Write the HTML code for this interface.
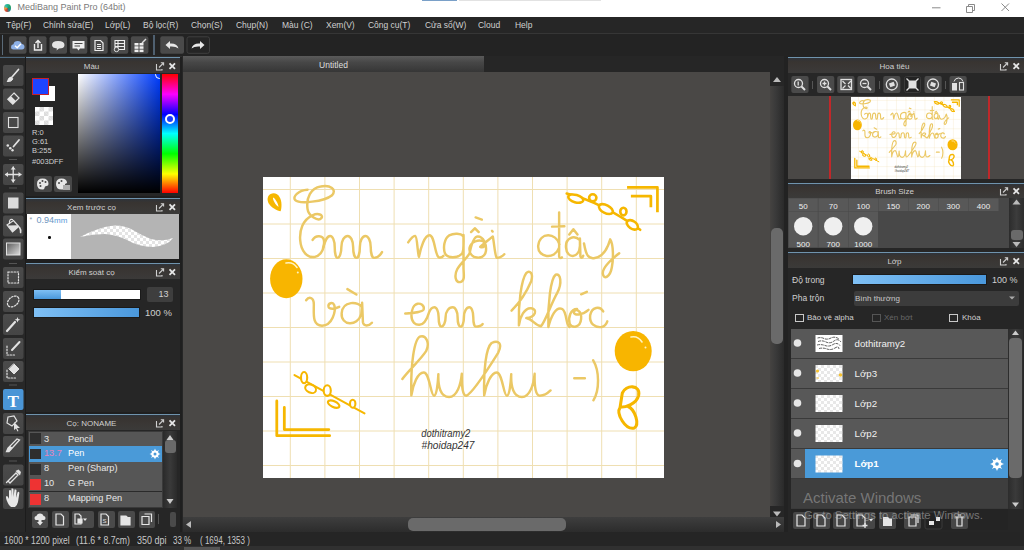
<!DOCTYPE html>
<html><head><meta charset="utf-8">
<style>
*{margin:0;padding:0;box-sizing:border-box}
html,body{width:1024px;height:550px;overflow:hidden;background:#262626;font-family:"Liberation Sans",sans-serif;}
.a{position:absolute}
#title{left:0;top:0;width:1024px;height:17px;background:#fff}
#menu{left:0;top:17px;width:1024px;height:16px;background:#262626;color:#d0d0d0;font-size:9px}
#menu span{position:absolute;top:3px;white-space:nowrap;transform-origin:0 0;transform:scaleX(.94)}
#tb{left:0;top:33px;width:1024px;height:23px;background:#232323;border-top:1px solid #363636}
.tbtn{position:absolute;top:2px;width:18px;height:18px;background:#4a4a4a;border-radius:2px}
.tool{position:absolute;left:3px;width:20px;height:21px;background:#484848;border-radius:2px}
.tsep{position:absolute;left:9px;width:8px;height:1px;background:#555}
.ptop{position:absolute;height:1px;background:#6f93ad}
.ph{position:absolute;height:15px;background:#383533;color:#d0d0d0;font-size:8px;text-align:center;line-height:15px;padding-top:0.5px;white-space:nowrap}
.pb{position:absolute;background:#262626}
.hic{position:absolute;top:3px;width:9px;height:9px;}
</style></head><body>

<!-- TITLE -->
<div class="a" id="title">
  <div class="a" style="left:4px;top:4px;width:7px;height:8px;border-radius:50% 50% 50% 50%;background:conic-gradient(from 200deg,#d04030 0deg,#f0a040 60deg,#30c0b0 120deg,#20a060 220deg,#1a8a90 300deg,#d04030 360deg)"></div>
  <div class="a" style="left:17.5px;top:2px;font-size:9px;color:#7a7a7a;white-space:nowrap">MediBang Paint Pro (64bit)</div>
  <div class="a" style="left:422px;top:0;width:35px;height:1px;background:#7aa0c8"></div>
  <div class="a" style="left:459px;top:0;width:142px;height:1px;background:#e2e2e2"></div>
  <svg class="a" style="left:928px;top:0" width="90" height="17">
   <path d="M4 7.8 H12.5" stroke="#8a8a8a" stroke-width="1"/>
   <path d="M38.5 6.5 H44.5 V12.5 H38.5Z M40.5 6.5 V4.5 H46.5 V10.5 H44.5" stroke="#8a8a8a" stroke-width="1" fill="none"/>
   <path d="M73.5 3.5 L81 11 M81 3.5 L73.5 11" stroke="#8a8a8a" stroke-width="1"/>
  </svg>
</div>
<!-- MENU -->
<div class="a" id="menu">
  <span style="left:6.3px">Tệp(F)</span>
  <span style="left:42.7px">Chỉnh sửa(E)</span>
  <span style="left:105.4px">Lớp(L)</span>
  <span style="left:143px">Bộ lọc(R)</span>
  <span style="left:191.3px">Chọn(S)</span>
  <span style="left:236px">Chụp(N)</span>
  <span style="left:282.4px">Màu (C)</span>
  <span style="left:326.3px">Xem(V)</span>
  <span style="left:368.2px">Công cụ(T)</span>
  <span style="left:424.7px">Cửa sổ(W)</span>
  <span style="left:478.1px">Cloud</span>
  <span style="left:514.5px">Help</span>
</div>
<!-- TOOLBAR -->
<div class="a" id="tb">
  <div class="a" style="left:2px;top:1px;width:1px;height:20px;background:#5a6a78"></div>
  <div class="a" style="left:153px;top:1px;width:1.5px;height:20px;background:#4f6070"></div>
</div>
<svg class="a" style="left:0;top:33px" width="220" height="23">
 <g fill="#4a4a4a">
  <rect x="9" y="3.3" width="17.5" height="17.5" rx="2"/>
  <rect x="29" y="3.3" width="17.5" height="17.5" rx="2"/>
  <rect x="49.5" y="3.3" width="17.5" height="17.5" rx="2"/>
  <rect x="69.8" y="3.3" width="17.5" height="17.5" rx="2"/>
  <rect x="90.2" y="3.3" width="17.5" height="17.5" rx="2"/>
  <rect x="110.8" y="3.3" width="17.5" height="17.5" rx="2"/>
  <rect x="130.9" y="3.3" width="17.5" height="17.5" rx="2"/>
  <rect x="160.3" y="3.3" width="23.7" height="17.5" rx="2"/>
 </g>
 <rect x="187" y="3.8" width="22.5" height="16.5" rx="2" fill="#252525" stroke="#3f3f3f"/>
 <!-- cloud -->
 <path d="M13.5 16.5 Q11 16.5 11 14 Q11 11.5 13.5 11.3 Q14 8 17.8 8 Q21 8 21.8 11 Q24.5 11.3 24.5 13.8 Q24.5 16.5 22 16.5Z" fill="#8fb2e8"/>
 <path d="M15 12.8 L17.2 14.8 L21 10.8" stroke="#fff" stroke-width="1.4" fill="none"/>
 <g stroke="#eee" fill="none" stroke-width="1.4">
  <!-- share -->
  <path d="M34.5 11 V17 H41.5 V11"/><path d="M38 15 V8 M35.5 10 L38 7.5 L40.5 10"/>
  <!-- doc -->
  <path d="M95 7.5 H100.5 L103 10 V17.5 H95Z" stroke-width="1.2"/><path d="M97 11.5 H101 M97 13.5 H101 M97 15.5 H101" stroke-width="1"/>
  <!-- list gear -->
  <path d="M115 7.5 H124.5 V16.5 H115Z M115 10.5 H124.5 M115 13.5 H124.5 M118 7.5 V16.5" stroke-width="1.1"/>
 </g>
 <!-- bubble -->
 <path d="M58 8 Q64.5 8 64.5 12 Q64.5 15.5 59 15.5 L56.5 17.5 L57 15.5 Q52 15 52 12 Q52 8 58 8Z" fill="#e6e6e6"/>
 <!-- form -->
 <path d="M72.5 8 H84.5 V15.5 H80 L78.5 17.5 L77 15.5 H72.5Z" fill="#eee"/>
 <path d="M74.5 10.5 H82.5 M74.5 13 H80" stroke="#4a4a4a" stroke-width="1.2"/>
 <circle cx="116.5" cy="16.5" r="2.2" fill="#4a4a4a" stroke="#ddd" stroke-width="1"/>
 <!-- grid pencil -->
 <g fill="#eee"><rect x="134.5" y="10" width="4" height="2.5"/><rect x="139.5" y="10" width="4" height="2.5"/><rect x="134.5" y="13.3" width="4" height="2.5"/><rect x="139.5" y="13.3" width="4" height="2.5"/><rect x="134.5" y="16.6" width="4" height="2.5"/><rect x="139.5" y="16.6" width="4" height="2.5"/></g>
 <path d="M142 10 L146 6" stroke="#ddd" stroke-width="1.5"/>
 <!-- undo -->
 <path d="M165.5 12 L170 8 V10.5 Q177 10 178.5 15.5 Q175.5 13 170 13.5 V16Z" fill="#e8e8e8"/>
 <!-- redo -->
 <path d="M204.5 12 L200 8 V10.5 Q193 10 191.5 15.5 Q194.5 13 200 13.5 V16Z" fill="#e8e8e8"/>
</svg>
<div class="a" style="left:0;top:56px;width:1024px;height:1px;background:#2e2e2e"></div>


<!-- TOOLS COLUMN -->
<div class="a" style="left:0;top:57px;width:26px;height:475px;background:#282828"></div>
<div class="a" style="left:25px;top:57px;width:1px;height:475px;background:#1c1c1c"></div>
<div class="a" style="left:0;top:57px;width:25px;height:1px;background:#4f6a80"></div>
<svg class="a" style="left:0;top:0" width="26" height="532">
<defs>
<linearGradient id="gbtn" x1="0" y1="0" x2="0" y2="1"><stop offset="0" stop-color="#4b4b4b"/><stop offset="1" stop-color="#454545"/></linearGradient>
<linearGradient id="ggrad" x1="0" y1="0" x2="1" y2="1"><stop offset="0" stop-color="#5a5a5a"/><stop offset="1" stop-color="#e0e0e0"/></linearGradient>
</defs>
<g fill="url(#gbtn)">
<rect x="3" y="65" width="20.5" height="21" rx="2"/>
<rect x="3" y="88.5" width="20.5" height="21" rx="2"/>
<rect x="3" y="112" width="20.5" height="21" rx="2"/>
<rect x="3" y="135.5" width="20.5" height="21" rx="2"/>
<rect x="3" y="164" width="20.5" height="21" rx="2"/>
<rect x="3" y="192.5" width="20.5" height="21" rx="2"/>
<rect x="3" y="215.5" width="20.5" height="21" rx="2"/>
<rect x="3" y="238.5" width="20.5" height="21" rx="2"/>
<rect x="3" y="267" width="20.5" height="21" rx="2"/>
<rect x="3" y="291" width="20.5" height="21" rx="2"/>
<rect x="3" y="314" width="20.5" height="21" rx="2"/>
<rect x="3" y="338" width="20.5" height="21" rx="2"/>
<rect x="3" y="361" width="20.5" height="21" rx="2"/>
<rect x="3" y="413" width="20.5" height="21" rx="2"/>
<rect x="3" y="436" width="20.5" height="21" rx="2"/>
<rect x="3" y="464.5" width="20.5" height="21" rx="2"/>
<rect x="3" y="488" width="20.5" height="21" rx="2"/>
</g>
<rect x="3" y="389" width="20.5" height="21" rx="2" fill="#4a95d6"/>
<g fill="#555">
<rect x="9" y="159" width="8" height="1"/><rect x="9" y="187.5" width="8" height="1"/>
<rect x="9" y="263" width="8" height="1"/><rect x="9" y="384.5" width="8" height="1"/>
<rect x="9" y="460.5" width="8" height="1"/>
</g>
<g stroke="#e2e2e2" fill="none" stroke-width="1.6" stroke-linecap="round">
<!-- brush -->
<path d="M18.5 69.5 L12 77" stroke-width="1.7"/>
<path d="M7.5 81.5 Q8 77.5 11 77 L12.8 78.6 Q12 82 7.5 81.5Z" fill="#e2e2e2" stroke-width="1"/>
<!-- eraser -->
<path d="M14 93 L19 98 L12.8 104.2 L7.8 99.2Z" stroke-width="1.2"/>
<path d="M7.8 99.2 L10.9 96.1 L15.9 101.1 L12.8 104.2Z" fill="#e2e2e2" stroke="none"/>
<!-- rect -->
<rect x="8.5" y="117.5" width="9.5" height="10" stroke-width="1.1"/>
<!-- dot pen -->
<path d="M19 140 L13.5 146.5" stroke-width="1.8"/>
<circle cx="7.8" cy="145.5" r="1.3" fill="#e2e2e2" stroke="none"/><circle cx="10.3" cy="148.3" r="1.3" fill="#e2e2e2" stroke="none"/><circle cx="12.5" cy="150.3" r="1.2" fill="#e2e2e2" stroke="none"/>
<!-- move -->
<path d="M13.2 167 V182 M5.5 174.5 H21" stroke-width="1.3"/>
<path d="M13.2 166.5 l-2.5 3 h5z M13.2 182.5 l-2.5 -3 h5z M5 174.5 l3 -2.5 v5z M21.5 174.5 l-3 -2.5 v5z" fill="#e2e2e2" stroke="none"/>
<!-- filled square -->
<rect x="8" y="197.5" width="10.5" height="11" fill="#dcdcdc" stroke="none"/>
<!-- bucket -->
<path d="M7 225 L13.5 220.5 L18.8 226.5 L12.5 232 Z" fill="none" stroke="#e2e2e2" stroke-width="1.2"/>
<path d="M7.6 225.5 L17.5 225.2 L18.8 226.5 L12.5 232Z" fill="#e2e2e2" stroke="none"/>
<path d="M9.5 223.5 Q9 218.5 12.5 219.5" stroke-width="1.2"/>
<path d="M19.5 227.5 Q21.2 230 20.6 232.5" stroke-width="1.6"/>
<!-- gradient -->
<rect x="6.5" y="243" width="13.5" height="12" fill="url(#ggrad)" stroke="#e2e2e2" stroke-width="1"/>
<!-- dotted rect -->
<rect x="8" y="272" width="10.5" height="11" stroke-width="1.2" stroke-dasharray="1.5 1.5"/>
<!-- lasso -->
<ellipse cx="13.2" cy="301.5" rx="6.5" ry="4.5" transform="rotate(-40 13.2 301.5)" stroke-width="1.2" stroke-dasharray="1.5 1.5"/>
<!-- wand -->
<path d="M7 331 L15 322" stroke-width="2.2"/>
<path d="M17.5 317 l0.8 2 2 .8 -2 .8 -.8 2 -.8 -2 -2 -.8 2 -.8z" fill="#e2e2e2" stroke="none"/>
<!-- select pen -->
<path d="M7 346 V355 H16" stroke-width="1.2" stroke-dasharray="1.5 1.5"/>
<path d="M19.5 342 L12 350" stroke-width="2"/>
<!-- select eraser -->
<path d="M7 370 V378 H16" stroke-width="1.2" stroke-dasharray="1.5 1.5"/>
<path d="M14 364 L19 369 L14 374 L9 369Z" fill="#e2e2e2" stroke-width="1"/>
<!-- shape select -->
<path d="M8 417 L14 416 L17 421 L12 426 L7 423Z" stroke-width="1.2"/>
<path d="M14 422 L20 428 L17 428 L18.5 431 L17.5 431.5 L16 428.5 L14 430Z" fill="#e2e2e2" stroke="none"/>
<!-- knife -->
<path d="M19.5 440 L9 451.5 L6.5 451.5 L8 448 L17 439 Z" fill="none" stroke-width="1.3"/>
<path d="M8 448 L6.5 451.5 L9 451.5 L12.5 447.5 L10 446Z" fill="#e2e2e2" stroke="none"/>
<!-- eyedropper -->
<path d="M8 481 L6.5 482.5 M8 481 L16 473 L18 475 L10 483 Z" stroke-width="1.3"/>
<path d="M15.5 471 L20 475.5 L21 472 L18.5 469.5Z" fill="#e2e2e2" stroke="none"/>
</g>
<!-- T -->
<text x="13.2" y="407" font-family="Liberation Serif" font-size="17" font-weight="bold" fill="#fff" text-anchor="middle">T</text>
<!-- hand -->
<path d="M9 505 Q6 500 6 497 L6.5 496 Q7.5 496 8 497 L9 499 L9 491 Q9 490 10 490 Q11 490 11 491 L11 497 L11.5 489 Q11.5 488 12.5 488.5 Q13.5 488.5 13.5 489.5 L13.5 497 L14.5 490 Q14.5 489 15.5 489.5 Q16.5 489.5 16.5 490.5 L16 498 L17.5 492.5 Q18 491.5 19 492 Q19.5 492.5 19.3 493.5 L18 502 Q17 506 15 507 L11 507Z" fill="#e8e8e8"/>
</svg>
<!-- LEFT PANELS -->
<div class="a" style="left:26px;top:57px;width:156px;height:475px;background:#1f1f1f"></div>
<!-- Mau -->
<div class="ptop" style="left:26px;top:57px;width:154px"></div>
<div class="a" style="left:26px;top:58px;width:154px;height:15px;background:linear-gradient(#2f3339,#383431 25%,#3a3735 60%,#3b3a39)"></div>
<div class="ph" style="left:26px;top:58px;width:131px;background:transparent">Màu</div>
<div class="pb" style="left:26px;top:73px;width:154px;height:123px"></div>
<svg class="a" style="left:154px;top:60px" width="26" height="12">
 <path d="M3 4.5 H2.5 V10 H8 V9" stroke="#cfcfcf" fill="none" stroke-width="1.1"/>
 <path d="M5 7.5 L9 3.5 M6.8 2.8 H9.6 V5.6" stroke="#cfcfcf" fill="none" stroke-width="1.1"/>
 <path d="M15.5 3.3 L21 8.8 M21 3.3 L15.5 8.8" stroke="#e6e6e6" stroke-width="1.8"/>
</svg>
<div class="a" style="left:39.5px;top:85.5px;width:15.5px;height:15.5px;background:#fff"></div>
<div class="a" style="left:31.5px;top:78px;width:17px;height:17px;background:#1d44ff;border:1.5px solid #c8202a"></div>
<div class="a" style="left:35px;top:106.5px;width:17.5px;height:18px;background:#fff;background-image:linear-gradient(45deg,#ddd 25%,transparent 25%,transparent 75%,#ddd 75%),linear-gradient(45deg,#ddd 25%,transparent 25%,transparent 75%,#ddd 75%);background-size:9px 9px;background-position:0 0,4.5px 4.5px"></div>
<div class="a" style="left:32px;top:128px;font-size:7.5px;line-height:9px;color:#cfcfcf">R:0<br>G:61<br>B:255</div>
<div class="a" style="left:32px;top:157px;font-size:7.5px;color:#cfcfcf">#003DFF</div>
<div class="a" style="left:34px;top:176px;width:17.5px;height:16px;background:#484848;border-radius:2px"></div>
<div class="a" style="left:54px;top:176px;width:17.5px;height:16px;background:#484848;border-radius:2px"></div>
<svg class="a" style="left:34px;top:176px" width="40" height="16">
 <path d="M8.5 2.5 Q14.5 2.5 14.5 8 Q14.5 10 12.5 10 Q10.5 10 10.5 12 Q10.5 13.5 8.5 13.5 Q3 13.5 3 8 Q3 2.5 8.5 2.5Z" fill="#e6e6e6"/>
 <circle cx="6" cy="7" r="1" fill="#484848"/><circle cx="8.5" cy="5" r="1" fill="#484848"/><circle cx="11.5" cy="6" r="1" fill="#484848"/><circle cx="6.5" cy="10" r="1" fill="#484848"/>
 <path d="M27.5 2.5 Q33 2.5 33 7 L31 8 L31 13.5 H27.5 Q22 13.5 22 8 Q22 2.5 27.5 2.5Z" fill="#e6e6e6"/>
 <circle cx="25" cy="7" r="1" fill="#484848"/><circle cx="27.5" cy="5" r="1" fill="#484848"/>
 <rect x="29" y="9" width="7" height="5" fill="#aaa"/>
</svg>
<div class="a" style="left:77.5px;top:74px;width:82px;height:118.5px;background:linear-gradient(to bottom,rgba(0,0,0,0),#000),linear-gradient(to right,#fff,#003dff)"></div>
<div class="a" style="left:77.5px;top:74px;width:82px;height:118.5px;overflow:hidden"><div class="a" style="left:77px;top:-4px;width:9px;height:9px;border:1.5px solid #fff;border-radius:50%"></div></div>
<div class="a" style="left:162px;top:74px;width:16px;height:118.5px;background:linear-gradient(to bottom,#ff0000 0%,#ff00ff 17%,#0000ff 34%,#00ffff 50%,#00ff00 67%,#ffff00 84%,#ff0000 100%)"></div>
<div class="a" style="left:165px;top:114px;width:10px;height:10px;border:2px solid #fff;border-radius:50%;background:#1a3cff"></div>

<!-- Xem truoc co -->
<div class="ptop" style="left:26px;top:198px;width:154px"></div>
<div class="a" style="left:26px;top:199px;width:154px;height:15px;background:linear-gradient(#2f3339,#383431 25%,#3a3735 60%,#3b3a39)"></div>
<div class="ph" style="left:26px;top:199px;width:131px;background:transparent">Xem trước cọ</div>
<svg class="a" style="left:154px;top:201px" width="26" height="12">
 <path d="M3 4.5 H2.5 V10 H8 V9" stroke="#cfcfcf" fill="none" stroke-width="1.1"/>
 <path d="M5 7.5 L9 3.5 M6.8 2.8 H9.6 V5.6" stroke="#cfcfcf" fill="none" stroke-width="1.1"/>
 <path d="M15.5 3.3 L21 8.8 M21 3.3 L15.5 8.8" stroke="#e6e6e6" stroke-width="1.8"/>
</svg>
<div class="a" style="left:26.5px;top:214px;width:44.5px;height:45px;background:#fff"></div>
<div class="a" style="left:71px;top:214px;width:108px;height:45px;background:#b4b4b4"></div>
<div class="a" style="left:29.5px;top:216px;font-size:7px;color:#8a9aaa">*</div><div class="a" style="left:36.5px;top:215.3px;font-size:9px;color:#6d95c0;white-space:nowrap">0.94<span style="font-size:8px;color:#5a9ad8">mm</span></div>
<div class="a" style="left:48px;top:236px;width:2.5px;height:2.5px;background:#111;border-radius:50%"></div>
<svg class="a" style="left:71px;top:214px" width="108" height="45">
 <defs><pattern id="chk" width="6" height="6" patternUnits="userSpaceOnUse"><rect width="6" height="6" fill="#fff"/><rect width="3" height="3" fill="#e4e4e4"/><rect x="3" y="3" width="3" height="3" fill="#e4e4e4"/></pattern></defs>
 <path d="M9 23 Q20 17 34 13 Q48 9 60 15 Q70 21 80 25 Q92 28 102 24 Q96 32 82 33 Q68 33 56 26 Q46 21 34 20 Q22 20 9 23Z" fill="url(#chk)"/>
</svg>

<!-- Kiem soat co -->
<div class="ptop" style="left:26px;top:263px;width:154px"></div>
<div class="a" style="left:26px;top:264px;width:154px;height:15px;background:linear-gradient(#2f3339,#383431 25%,#3a3735 60%,#3b3a39)"></div>
<div class="ph" style="left:26px;top:264px;width:131px;background:transparent">Kiểm soát cọ</div>
<svg class="a" style="left:154px;top:266px" width="26" height="12">
 <path d="M3 4.5 H2.5 V10 H8 V9" stroke="#cfcfcf" fill="none" stroke-width="1.1"/>
 <path d="M5 7.5 L9 3.5 M6.8 2.8 H9.6 V5.6" stroke="#cfcfcf" fill="none" stroke-width="1.1"/>
 <path d="M15.5 3.3 L21 8.8 M21 3.3 L15.5 8.8" stroke="#e6e6e6" stroke-width="1.8"/>
</svg>
<div class="pb" style="left:26px;top:279px;width:154px;height:133px"></div>
<div class="a" style="left:33px;top:288.5px;width:108px;height:11px;background:#fff;border:1px solid #1a1a1a"></div>
<div class="a" style="left:34px;top:289.5px;width:27px;height:9px;background:linear-gradient(#7fc0f5,#4a98dc)"></div>
<div class="a" style="left:146.5px;top:286.5px;width:26px;height:15.5px;background:#3e3e3e;border-radius:2px;color:#d0d0d0;font-size:9px;text-align:right;padding-right:4px;line-height:15px">13</div>
<div class="a" style="left:33px;top:307px;width:107px;height:11px;background:linear-gradient(90deg,#7fc0f5,#4a98dc);border:1px solid #1a1a1a"></div>
<div class="a" style="left:145px;top:307px;font-size:9.5px;color:#d0d0d0;white-space:nowrap">100 %</div>

<!-- Co NONAME -->
<div class="ptop" style="left:26px;top:414px;width:154px"></div>
<div class="a" style="left:26px;top:415px;width:154px;height:15px;background:linear-gradient(#2f3339,#383431 25%,#3a3735 60%,#3b3a39)"></div>
<div class="ph" style="left:26px;top:415px;width:131px;background:transparent">Cọ: NONAME</div>
<svg class="a" style="left:154px;top:417px" width="26" height="12">
 <path d="M3 4.5 H2.5 V10 H8 V9" stroke="#cfcfcf" fill="none" stroke-width="1.1"/>
 <path d="M5 7.5 L9 3.5 M6.8 2.8 H9.6 V5.6" stroke="#cfcfcf" fill="none" stroke-width="1.1"/>
 <path d="M15.5 3.3 L21 8.8 M21 3.3 L15.5 8.8" stroke="#e6e6e6" stroke-width="1.8"/>
</svg>
<div class="pb" style="left:26px;top:430px;width:154px;height:102px"></div>
<div class="a" style="left:28px;top:430.5px;width:135px;height:77px;background:#2a2a2a;border:1px solid #3a3a3a"></div>
<div class="a" style="left:29px;top:431.5px;width:133px;height:14px;background:#565656"></div>
<div class="a" style="left:29px;top:446px;width:133px;height:15.5px;background:#4a9ad8"></div>
<div class="a" style="left:29px;top:462px;width:133px;height:14.5px;background:#565656"></div>
<div class="a" style="left:29px;top:477px;width:133px;height:14px;background:#565656"></div>
<div class="a" style="left:29px;top:491.5px;width:133px;height:15px;background:#565656"></div>
<div class="a" style="left:30px;top:433px;width:11px;height:10.5px;background:#2e2e2e"></div>
<div class="a" style="left:30px;top:448.5px;width:11px;height:10.5px;background:#2e2e2e"></div>
<div class="a" style="left:30px;top:464px;width:11px;height:10.5px;background:#2e2e2e"></div>
<div class="a" style="left:30px;top:479px;width:11px;height:10.5px;background:#ee3333"></div>
<div class="a" style="left:30px;top:494px;width:11px;height:10.5px;background:#ee3333"></div>
<div class="a" style="left:44px;top:431.8px;font-size:9.2px;line-height:15px;color:#e8e8e8;white-space:nowrap">3</div>
<div class="a" style="left:68px;top:431.8px;font-size:9.2px;line-height:15px;color:#e8e8e8;white-space:nowrap">Pencil</div>
<div class="a" style="left:44px;top:446.3px;font-size:9.2px;line-height:15px;color:#e884b8;white-space:nowrap">13.7</div>
<div class="a" style="left:68px;top:446.3px;font-size:9.2px;line-height:15px;color:#fff;white-space:nowrap">Pen</div>
<div class="a" style="left:44px;top:461.3px;font-size:9.2px;line-height:15px;color:#e8e8e8;white-space:nowrap">8</div>
<div class="a" style="left:68px;top:461.3px;font-size:9.2px;line-height:15px;color:#e8e8e8;white-space:nowrap">Pen (Sharp)</div>
<div class="a" style="left:44px;top:476.3px;font-size:9.2px;line-height:15px;color:#e8e8e8;white-space:nowrap">10</div>
<div class="a" style="left:68px;top:476.3px;font-size:9.2px;line-height:15px;color:#e8e8e8;white-space:nowrap">G Pen</div>
<div class="a" style="left:44px;top:491.3px;font-size:9.2px;line-height:15px;color:#e8e8e8;white-space:nowrap">8</div>
<div class="a" style="left:68px;top:491.3px;font-size:9.2px;line-height:15px;color:#e8e8e8;white-space:nowrap">Mapping Pen</div>
<svg class="a" style="left:149px;top:448px" width="12" height="12"><g fill="#fff"><circle cx="6" cy="6" r="3.6"/><path d="M6 0.5 L7 3 L5 3Z M6 11.5 L7 9 L5 9Z M0.5 6 L3 5 L3 7Z M11.5 6 L9 5 L9 7Z M2 2 L4.2 3.2 L3.2 4.2Z M10 10 L7.8 8.8 L8.8 7.8Z M10 2 L8.8 4.2 L7.8 3.2Z M2 10 L3.2 7.8 L4.2 8.8Z"/></g><circle cx="6" cy="6" r="1.5" fill="#4a9ad8"/></svg>
<!-- scrollbar -->
<div class="a" style="left:163px;top:431px;width:14px;height:77px;background:linear-gradient(90deg,#2a2a2a,#3a3a3a,#2a2a2a)"></div>
<svg class="a" style="left:163px;top:431px" width="14" height="77"><path d="M7 4 L10.5 9 H3.5Z" fill="#ccc"/><path d="M7 73 L10.5 68 H3.5Z" fill="#ccc"/></svg>
<div class="a" style="left:164.5px;top:440px;width:11px;height:13px;background:#6a6a6a;border-radius:3px"></div>
<!-- bottom toolbar -->
<div class="a" style="left:32px;top:511px;width:15.5px;height:16.5px;background:#4a4a4a;border-radius:2px"></div>
<div class="a" style="left:51.5px;top:511px;width:17px;height:16.5px;background:#4a4a4a;border-radius:2px"></div>
<div class="a" style="left:72px;top:511px;width:22px;height:16.5px;background:#4a4a4a;border-radius:2px"></div>
<div class="a" style="left:97.5px;top:511px;width:17px;height:16.5px;background:#4a4a4a;border-radius:2px"></div>
<div class="a" style="left:117.5px;top:511px;width:17px;height:16.5px;background:#4a4a4a;border-radius:2px"></div>
<div class="a" style="left:138.5px;top:511px;width:16.5px;height:16.5px;background:#4a4a4a;border-radius:2px"></div>
<div class="a" style="left:158px;top:514px;width:1px;height:10px;background:#555"></div>
<div class="a" style="left:170px;top:512px;width:6px;height:15px;background:#4a4a4a;border-radius:2px"></div>
<svg class="a" style="left:32px;top:511px" width="125" height="17">
 <g fill="#e6e6e6" stroke="none">
  <path d="M4 9 Q2.5 9 2.5 7 Q2.5 5 4.5 5 Q5 2.5 8 2.5 Q11 2.5 11.5 5 Q13.5 5 13.5 7 Q13.5 9 12 9 Z"/>
  <path d="M6.5 9 H9.5 V11 H11 L8 14.5 L5 11 H6.5Z" fill="#e6e6e6"/>
 </g>
 <g stroke="#e6e6e6" fill="none" stroke-width="1.2">
  <path d="M24 3 H29 L31.5 5.5 V14 H24Z"/>
  <path d="M43 3 H47 L49 5 V13 H43Z"/><path d="M46 8 H50 V12 H46Z" fill="#e6e6e6"/>
  <path d="M69 3 H74 L76.5 5.5 V14 H69Z"/>
  <path d="M89 5 H94 L95.5 6.5 H98 V14 H89Z" fill="#e6e6e6"/>
  <path d="M110 5.5 H117 V13.5 H110Z M112.5 3 H119.5 V11"/>
 </g>
 <path d="M51 7.5 L55 7.5 L53 10Z" fill="#e6e6e6"/>
 <text x="70.5" y="12" font-size="6" fill="#e6e6e6" font-family="Liberation Sans">S</text>
</svg>
<!-- CANVAS -->
<div class="a" style="left:182px;top:56px;width:606px;height:16px;background:#262626"></div>
<div class="a" style="left:183px;top:56px;width:301px;height:15.5px;background:linear-gradient(#5a5a5a,#474747 40%,#363636);color:#dedede;font-size:8.5px;text-align:center;line-height:18px">Untitled</div>
<div class="a" style="left:183px;top:72px;width:587px;height:445px;background:#4a4846"></div>
<div class="a" style="left:770px;top:72px;width:14px;height:445px;background:linear-gradient(90deg,#454341,#3a3a3a 40%,#2a2a2a)"></div>
<div class="a" style="left:770px;top:72px;width:14px;height:14px;background:#262626"></div><div class="a" style="left:770px;top:506px;width:14px;height:11px;background:#262626"></div><svg class="a" style="left:770px;top:72px" width="14" height="460"><path d="M7 5 L11 10 H3Z" fill="#bbb"/><path d="M7 444.5 L11 439.5 H3Z" fill="#bbb"/></svg>
<div class="a" style="left:771px;top:228px;width:12px;height:116px;background:#6a6a6a;border-radius:5px"></div>
<div class="a" style="left:183px;top:517px;width:601px;height:15px;background:linear-gradient(#3e3e3e,#2c2c2c)"></div>
<svg class="a" style="left:183px;top:517px" width="601" height="15"><path d="M3 7.5 L8 4 V11Z" fill="#bbb"/><path d="M598 7.5 L593 4 V11Z" fill="#bbb"/></svg>
<div class="a" style="left:408px;top:518px;width:158px;height:13px;background:#6a6a6a;border-radius:5px"></div>

<svg width="0" height="0" style="position:absolute">
<defs>
<symbol id="art" viewBox="0 0 401 301">
 <rect width="401" height="301" fill="#fff"/>
 <g stroke="#efdfb2" stroke-width="1" fill="none">
  <path d="M27.3 0V301M61.9 0V301M96.5 0V301M131.1 0V301M165.7 0V301M200.3 0V301M234.9 0V301M269.5 0V301M304.1 0V301M338.7 0V301M373.3 0V301"/>
  <path d="M0 12.5H401M0 47H401M0 81.5H401M0 116H401M0 150.5H401M0 185H401M0 219.5H401M0 254H401M0 288.5H401"/>
 </g>
 <g fill="none" stroke="#ebc865" stroke-linecap="round" stroke-linejoin="round">
  <!-- Em -->
  <g transform="translate(20,1) scale(0.1637)" style="stroke-width:calc(15px * var(--k,1))">
   <path d="M150,72 C95,75 55,115 75,135 C100,160 250,145 300,105 C330,70 290,40 230,52 C170,62 140,120 150,190 C155,230 215,270 235,245 C248,225 215,212 180,228 C120,255 100,320 105,380 C110,450 150,490 195,482 C240,470 255,420 250,380 C245,350 200,345 181,378"/>
   <path d="M245,426 C255,392 266,354 288,354 C303.3,354 315.9,383.5 315.9,421 C315.9,458.5 323.6,488 333,488 C346,488 356.6,458.5 356.6,421 C356.6,383.5 373.9,354 395,354 C413.4,354 428.5,383.5 428.5,421 C428.5,458.5 437.7,488 449,488 C460.3,488 469.5,458.5 469.5,421 C469.5,383.5 484.6,354 503,354 C521.1,354 535.9,383.5 535.9,421 C535.9,458.5 544.9,488 556,488 C570,488 592,476 605,453"/>
  </g>
  <!-- ngoi -->
  <g transform="translate(137,38) scale(0.1637)" style="stroke-width:calc(15px * var(--k,1))">
   <path d="M50,167 C65,145 80,125 93,128 C106,131 106,230 116,256 C126,200 150,124 180,124 C212,124 212,240 235,257 C245,262 258,258 265,250"/>
   <path d="M388,130 C370,112 330,110 300,125 C270,145 262,200 275,235 C290,265 350,268 380,235 C388,220 390,180 388,122 L388,320 C388,360 400,405 368,410 C338,412 330,370 350,330 C370,295 405,268 425,235 C432,200 445,131 475,131 C510,131 530,180 525,220 C520,255 490,262 470,260 C440,258 420,230 425,200 C430,170 480,140 515,165 C530,180 510,205 490,195 C505,180 545,150 567,131 C575,170 580,245 590,260 C600,265 625,255 637,240"/>
   <path d="M434,104 L457,81 L481,104 M462,15 L500,28 M562,97 l4,4"/>
  </g>
  <!-- day -->
  <g transform="translate(267,28) scale(0.1637)" style="stroke-width:calc(15px * var(--k,1))">
   <path d="M178,45 L178,315 C178,325 190,325 195,320 M180,240 C160,170 60,160 50,250 C45,320 150,340 178,260 M135,132 L210,130"/>
   <path d="M305,215 C270,180 215,200 220,260 C225,330 300,330 305,250 L305,205 L308,315 C310,325 320,325 325,310 M240,180 L265,148 L290,180"/>
   <path d="M330,235 C340,290 350,330 390,325 C440,320 470,280 490,210 C510,240 510,330 500,380 C490,440 450,460 445,420 C440,380 500,330 545,295"/>
  </g>
  <!-- va -->
  <g transform="translate(32,93) scale(0.1637)" style="stroke-width:calc(15px * var(--k,1))">
   <path d="M68,185 C85,160 115,165 115,210 C115,270 105,340 165,340 C230,340 250,250 240,215 C230,190 200,205 205,225 C210,240 240,240 270,225"/>
   <path d="M410,230 C390,190 290,185 285,265 C280,340 380,350 405,270 L410,200 L415,320 C420,345 450,345 470,322 M320,117 L375,150"/>
  </g>
  <!-- em -->
  <g transform="translate(137,93) scale(0.1637)" style="stroke-width:calc(15px * var(--k,1))">
   <path d="M32,266 C80,262 140,258 145,240 C150,215 125,203 108,206 C85,210 70,240 70,280 C70,320 95,336 118,335 C150,333 165,300 177,260 C185,240 195,228 210,228 C224.3,228 236,254 236,287 C236,320 243.2,346 252,346 C266.6,346 278.6,320 278.6,287 C278.6,254 298.1,228 322,228 C338.4,228 351.8,254 351.8,287 C351.8,320 360,346 370,346 C381.3,346 390.5,320 390.5,287 C390.5,254 405.6,228 424,228 C437,228 447.6,254 447.6,287 C447.6,320 454.1,346 462,346 C480,346 498,340 505,330"/>
  </g>
  <!-- khoc -->
  <g transform="translate(242,78) scale(0.1637)" style="stroke-width:calc(15px * var(--k,1))">
   <path d="M40,340 C80,300 130,230 160,160 C175,110 150,90 130,110 C100,150 80,300 85,430 C90,380 120,320 160,325 C200,330 190,380 130,385 C170,390 180,430 220,435 C250,400 280,300 320,230 C350,170 340,110 310,120 C280,140 260,300 265,440 C280,380 310,310 350,330 C380,350 370,430 395,440"/>
   <path d="M440,330 C400,330 385,380 395,420 C410,450 460,445 465,390 C470,340 430,320 420,350 C420,370 470,370 510,335 M465,240 L500,225"/>
   <path d="M600,345 C580,310 530,315 520,370 C515,420 550,445 590,440 C610,435 620,420 625,405"/>
  </g>
  <!-- huhu -->
  <g transform="translate(132,148) scale(0.1637)" style="stroke-width:calc(15px * var(--k,1))">
   <path d="M45,330 C80,280 150,220 190,160 C215,110 190,60 155,70 C115,85 95,250 100,430 C110,360 140,290 175,290 C212,290 218,432 238,432 C254,432 262,360 265,300 C262,380 280,440 330,440 C380,440 402,360 408,298 C406,380 415,432 435,432 C470,420 580,250 630,170 C660,110 630,90 590,110 C555,140 540,280 545,430 C555,360 590,290 620,290 C657,290 663,432 683,432 C699,432 707,360 710,300 C707,380 725,440 775,440 C825,440 847,360 853,298 C851,380 860,432 885,432 C915,432 940,410 950,400"/>
   <path d="M1095,325 L1160,325 M1210,215 C1250,280 1250,400 1212,460"/>
  </g>
 </g>
 <g fill="none" stroke="#f6b700" stroke-linecap="round" stroke-linejoin="round">
  <!-- top right vine + bracket -->
  <g style="stroke-width:calc(2.6px * var(--k,1))">
   <path d="M303.7,16.6 C320,20.5 345,30 377.2,52.8"/>
   <ellipse fill="#fff" cx="312.75" cy="21.6" rx="7.75" ry="3.7" transform="rotate(16 312.75 21.6)"/>
   <ellipse fill="#fff" cx="342.85" cy="32.1" rx="7.55" ry="4" transform="rotate(27 342.85 32.1)"/>
   <ellipse fill="#fff" cx="369.35" cy="47.85" rx="6.25" ry="3.8" transform="rotate(35 369.35 47.85)"/>
   <ellipse fill="#fff" cx="329.75" cy="20.8" rx="3.65" ry="3.5"/>
   <ellipse fill="#fff" cx="360.4" cy="34.6" rx="3.1" ry="3.8"/>
  </g>
  <g transform="translate(292,3) scale(0.1092)" style="stroke-width:calc(25px * var(--k,1))">
   <path d="M660,68 H938 V295 M695,148 H878 V250" stroke-linecap="butt"/>
  </g>
  <!-- bottom left vine + bracket -->
  <g style="stroke-width:calc(2.1px * var(--k,1))">
   <path d="M31.5,198.1 L101.5,236.3"/>
   <ellipse fill="#fff" cx="41.1" cy="200.6" rx="3.1" ry="5.6"/>
   <ellipse fill="#fff" cx="47.65" cy="211.7" rx="5.65" ry="4" transform="rotate(25 47.65 211.7)"/>
   <ellipse fill="#fff" cx="64.25" cy="213.55" rx="3.55" ry="5.35"/>
   <ellipse fill="#fff" cx="70.65" cy="227.15" rx="6.25" ry="2.9" transform="rotate(25 70.65 227.15)"/>
   <ellipse fill="#fff" cx="89.7" cy="226.7" rx="2.7" ry="4"/>
  </g>
  <g transform="translate(2,183) scale(0.1637)">
   <path d="M72,250 V462 H395 M118,290 V425 H390" style="stroke-width:calc(17px * var(--k,1))"/>
  </g>
  <!-- B -->
  <g transform="translate(332,143) scale(0.2183)" style="stroke-width:calc(14px * var(--k,1))">
   <path d="M125,335 C140,295 210,295 200,345 C190,385 140,400 115,400 C95,430 140,505 180,495 C205,480 185,410 150,395 M125,335 L115,400"/>
  </g>
  <!-- drop -->
  
 </g>
 </g>
 <g transform="translate(12.5,25.5) rotate(-30)"><path d="M0,-9.8 C4,-9.8 6.3,-6.5 6.3,-2.5 C6.3,2.5 2.5,8 0,10.2 C-2.5,8 -6.3,2.5 -6.3,-2.5 C-6.3,-6.5 -4,-9.8 0,-9.8Z" fill="#f6b700"/><path d="M0.3,-5.5 C1.8,-3.5 1.8,2 0.3,5.5 C-1.3,2 -1.3,-3.5 0.3,-5.5Z" fill="#fff"/></g>
 <ellipse cx="23.3" cy="101.8" rx="16.2" ry="19.5" fill="#f8b500"/>
 <path d="M23 86 Q30 84.5 34 90.5" stroke="#fff3c0" style="stroke-width:calc(1.6px * var(--k,1))" fill="none" stroke-linecap="round"/>
 <circle cx="34.8" cy="95.5" r="1" fill="#fff3c0"/>
 <ellipse cx="370.2" cy="174.1" rx="18.5" ry="20.2" fill="#f8b500"/>
 <path d="M368 160 Q375 158.5 379 165" stroke="#fff3c0" style="stroke-width:calc(1.6px * var(--k,1))" fill="none" stroke-linecap="round"/>
 <circle cx="382.5" cy="170.5" r="1" fill="#fff3c0"/>
 <text x="158.3" y="259.8" font-family="Liberation Sans" font-style="italic" font-size="10" fill="#333" textLength="49" lengthAdjust="spacingAndGlyphs">dothitramy2</text>
 <text x="158.5" y="271.9" font-family="Liberation Sans" font-style="italic" font-size="10" fill="#333" textLength="53" lengthAdjust="spacingAndGlyphs">#hoidap247</text>
</symbol>
</defs>
</svg>
<svg class="a" style="left:263px;top:177px" width="401" height="301"><use href="#art"/></svg>
<!-- RIGHT PANELS -->
<div class="a" style="left:784px;top:56px;width:240px;height:476px;background:#222"></div>
<!-- Hoa tieu -->
<div class="ptop" style="left:788px;top:57px;width:236px"></div>
<div class="a" style="left:788px;top:58px;width:236px;height:15px;background:linear-gradient(#2f3339,#383431 25%,#3a3735 60%,#3b3a39)"></div>
<div class="ph" style="left:788px;top:58px;width:213px;background:transparent">Hoa tiêu</div>
<svg class="a" style="left:998px;top:60px" width="26" height="12">
 <path d="M3 4.5 H2.5 V10 H8 V9" stroke="#cfcfcf" fill="none" stroke-width="1.1"/>
 <path d="M5 7.5 L9 3.5 M6.8 2.8 H9.6 V5.6" stroke="#cfcfcf" fill="none" stroke-width="1.1"/>
 <path d="M15.5 3.3 L21 8.8 M21 3.3 L15.5 8.8" stroke="#e6e6e6" stroke-width="1.8"/>
</svg>
<div class="pb" style="left:788px;top:73px;width:236px;height:23px;background:#272727"></div>
<svg class="a" style="left:788px;top:73px" width="236" height="23">
 <g fill="#4a4a4a">
  <rect x="3.3" y="3" width="17.3" height="17" rx="2"/>
  <rect x="29" y="3" width="17.3" height="17" rx="2"/>
  <rect x="49.2" y="3" width="17.3" height="17" rx="2"/>
  <rect x="69.4" y="3" width="17.6" height="17" rx="2"/>
  <rect x="95.2" y="3" width="17.2" height="17" rx="2"/>
  <rect x="136.5" y="3" width="17.2" height="17" rx="2"/>
  <rect x="161.5" y="3" width="17.2" height="17" rx="2"/>
 </g>
 <rect x="116.5" y="3.5" width="16" height="16" rx="2" fill="#232323" stroke="#3a3a3a"/>
 <g fill="#555"><rect x="24" y="8" width="1" height="8"/><rect x="91" y="8" width="1" height="8"/><rect x="157" y="8" width="1" height="8"/></g>
 <g stroke="#e0e0e0" fill="none" stroke-width="1.3">
  <circle cx="10.5" cy="10.5" r="4"/><path d="M13.5 13.5 L17 17" stroke-width="2"/>
  <circle cx="36.5" cy="10.5" r="4"/><path d="M39.5 13.5 L43 17" stroke-width="2"/><path d="M34.5 10.5 H38.5 M36.5 8.5 V12.5"/>
  <rect x="53" y="6.5" width="10.5" height="10"/>
  <circle cx="76.5" cy="10.5" r="4"/><path d="M79.5 13.5 L83 17" stroke-width="2"/><path d="M74.5 10.5 H78.5"/>
  <circle cx="103.8" cy="11.5" r="5.5"/>
  <circle cx="145" cy="11.5" r="5.5"/>
  <path d="M166 8.5 Q167 5 170.5 5 Q174 5 175 8.5" stroke-width="1"/><rect x="171.5" y="9.5" width="4" height="7.5" stroke-width="1.1"/>
 </g>
 <g fill="#e0e0e0">
  <path d="M10.2 8.5 V12.5" stroke="#e0e0e0" stroke-width="1.3"/>
  <rect x="101.5" y="9.5" width="5" height="4" transform="rotate(-20 104 11.5)"/>
  <rect x="142.5" y="9.5" width="5" height="4" transform="rotate(20 145 11.5)"/>
  <rect x="120.5" y="7.5" width="8" height="8"/>
  <path d="M54.5 8 l3 3 M63 8 l-3 3 M54.5 15.5 l3 -3 M63 15.5 l-3 -3" stroke="#e0e0e0" stroke-width="1.2"/>
  <rect x="164" y="10" width="5" height="7.5"/>
 </g>
 <g stroke="#e0e0e0" stroke-width="1.3"><path d="M118.5 5.5 L121 8 M130.5 5.5 L128 8 M118.5 17.5 L121 15 M130.5 17.5 L128 15"/></g>
</svg>
<div class="pb" style="left:788px;top:96px;width:236px;height:83px;background:#4a4846"></div>
<div class="a" style="left:829px;top:96px;width:2px;height:83px;background:#c0282a"></div>
<div class="a" style="left:988px;top:96px;width:2px;height:83px;background:#c0282a"></div>
<svg class="a" style="left:851px;top:96.5px;--k:1.7" width="110" height="82.5" viewBox="0 0 401 301" preserveAspectRatio="none"><use href="#art"/></svg>
<div class="a" style="left:788px;top:179px;width:236px;height:4px;background:#262626"></div>

<!-- Brush Size -->
<div class="ptop" style="left:788px;top:183px;width:236px"></div>
<div class="a" style="left:788px;top:184px;width:236px;height:14px;background:linear-gradient(#2f3339,#383431 25%,#3a3735 60%,#3b3a39)"></div>
<div class="ph" style="left:788px;top:184px;width:213px;height:14px;background:transparent;line-height:14px">Brush Size</div>
<svg class="a" style="left:998px;top:185px" width="26" height="12">
 <path d="M3 4.5 H2.5 V10 H8 V9" stroke="#cfcfcf" fill="none" stroke-width="1.1"/>
 <path d="M5 7.5 L9 3.5 M6.8 2.8 H9.6 V5.6" stroke="#cfcfcf" fill="none" stroke-width="1.1"/>
 <path d="M15.5 3.3 L21 8.8 M21 3.3 L15.5 8.8" stroke="#e6e6e6" stroke-width="1.8"/>
</svg>
<div class="pb" style="left:788px;top:198px;width:221px;height:50px;background:#484848"></div>
<svg class="a" style="left:788px;top:198px" width="221" height="50">
 <g fill="#585858">
  <rect x="0.8" y="0.4" width="29" height="12.6"/><rect x="30.5" y="0.4" width="29.5" height="12.6"/><rect x="60.5" y="0.4" width="29.5" height="12.6"/>
  <rect x="90.5" y="0.4" width="29.5" height="12.6"/><rect x="120.5" y="0.4" width="29.5" height="12.6"/><rect x="150.5" y="0.4" width="29.5" height="12.6"/><rect x="180.5" y="0.4" width="30" height="12.6"/>
  <rect x="0.8" y="13.5" width="29" height="35.8"/><rect x="30.5" y="13.5" width="29.5" height="35.8"/><rect x="60.5" y="13.5" width="29.5" height="35.8"/>
 </g>
 <g fill="#efefef"><circle cx="15.2" cy="28.3" r="9.2"/><circle cx="45.2" cy="28.3" r="9.2"/><circle cx="75.2" cy="28.3" r="9.2"/></g>
 <g font-family="Liberation Sans" font-size="8" fill="#f0f0f0" text-anchor="middle">
  <text x="15.2" y="10.5">50</text><text x="45.2" y="10.5">70</text><text x="75.2" y="10.5">100</text><text x="105.2" y="10.5">150</text>
  <text x="135.2" y="10.5">200</text><text x="165.2" y="10.5">300</text><text x="195.5" y="10.5">400</text>
  <text x="15.2" y="49">500</text><text x="45.2" y="49">700</text><text x="75.2" y="49">1000</text>
 </g>
</svg>
<div class="a" style="left:1009px;top:198px;width:15px;height:50px;background:linear-gradient(90deg,#2c2c2c,#3c3c3c,#2c2c2c)"></div>
<svg class="a" style="left:1009px;top:198px" width="15" height="50"><path d="M7.5 1.5 L11.5 6.5 H3.5Z" fill="#bbb"/><path d="M7.5 49 L11.5 44 H3.5Z" fill="#bbb"/></svg>
<div class="a" style="left:1010.5px;top:230px;width:12px;height:10px;background:#6a6a6a;border-radius:3px"></div>
<div class="a" style="left:788px;top:248px;width:236px;height:4px;background:#262626"></div>

<!-- Lop -->
<div class="ptop" style="left:788px;top:252px;width:236px"></div>
<div class="a" style="left:788px;top:253px;width:236px;height:15px;background:linear-gradient(#2f3339,#383431 25%,#3a3735 60%,#3b3a39)"></div>
<div class="ph" style="left:788px;top:253px;width:213px;background:transparent">Lớp</div>
<svg class="a" style="left:998px;top:255px" width="26" height="12">
 <path d="M3 4.5 H2.5 V10 H8 V9" stroke="#cfcfcf" fill="none" stroke-width="1.1"/>
 <path d="M5 7.5 L9 3.5 M6.8 2.8 H9.6 V5.6" stroke="#cfcfcf" fill="none" stroke-width="1.1"/>
 <path d="M15.5 3.3 L21 8.8 M21 3.3 L15.5 8.8" stroke="#e6e6e6" stroke-width="1.8"/>
</svg>
<div class="pb" style="left:788px;top:268px;width:236px;height:264px;background:#262626"></div>
<div class="a" style="left:792px;top:275px;font-size:8.5px;color:#d0d0d0;white-space:nowrap">Độ trong</div>
<div class="a" style="left:852px;top:273.5px;width:135px;height:11px;background:linear-gradient(90deg,#7fc0f5,#4a98dc);border:1px solid #1a1a1a"></div>
<div class="a" style="left:992px;top:275px;font-size:9px;color:#d0d0d0;white-space:nowrap">100 %</div>
<div class="a" style="left:792px;top:293px;font-size:8.5px;color:#d0d0d0;white-space:nowrap">Pha trộn</div>
<div class="a" style="left:853.5px;top:290.5px;width:165px;height:15.5px;background:#3c3c3c;border-radius:2px;color:#c8c8c8;font-size:8px;line-height:16px;padding-left:1.5px;white-space:nowrap">Bình thường</div>
<svg class="a" style="left:1008px;top:295px" width="8" height="6"><path d="M1 1.5 H7 L4 4.5Z" fill="#aaa"/></svg>
<div class="a" style="left:795px;top:313.5px;width:8.5px;height:8.5px;border:1px solid #c8c8c8"></div>
<div class="a" style="left:807px;top:313px;font-size:8px;color:#d0d0d0;white-space:nowrap">Bảo vệ alpha</div>
<div class="a" style="left:872px;top:313.5px;width:8.5px;height:8.5px;border:1px solid #555"></div>
<div class="a" style="left:884px;top:313px;font-size:8px;color:#666;white-space:nowrap">Xén bớt</div>
<div class="a" style="left:949px;top:313.5px;width:8.5px;height:8.5px;border:1px solid #c8c8c8"></div>
<div class="a" style="left:962px;top:313px;font-size:8px;color:#d0d0d0;white-space:nowrap">Khóa</div>
<!-- layer list -->
<div class="a" style="left:790.5px;top:328.5px;width:217px;height:180px;background:#3a3a3a"></div>
<div class="a" style="left:791px;top:329px;width:216.5px;height:28.5px;background:#585858"></div>
<div class="a" style="left:791px;top:359px;width:216.5px;height:28.5px;background:#585858"></div>
<div class="a" style="left:791px;top:389px;width:216.5px;height:28.5px;background:#585858"></div>
<div class="a" style="left:791px;top:419px;width:216.5px;height:28.5px;background:#585858"></div>
<div class="a" style="left:791px;top:449px;width:14px;height:29px;background:#585858"></div>
<div class="a" style="left:805px;top:449px;width:202.5px;height:29px;background:#4a9ad8"></div>
<div class="a" style="left:791px;top:478.5px;width:216.5px;height:29.5px;background:#3e3e3e"></div>
<g></g>
<svg class="a" style="left:791px;top:329px" width="217" height="150">
 <defs><pattern id="chk2" width="6" height="6" patternUnits="userSpaceOnUse"><rect width="6" height="6" fill="#fff"/><rect width="3" height="3" fill="#e8e8e8"/><rect x="3" y="3" width="3" height="3" fill="#e8e8e8"/></pattern></defs>
 <g fill="#e6e6e6"><circle cx="6.5" cy="14" r="3.8"/><circle cx="6.5" cy="44" r="3.8"/><circle cx="6.5" cy="74" r="3.8"/><circle cx="6.5" cy="104" r="3.8"/><circle cx="6.5" cy="134.5" r="3.8"/></g>
 <rect x="24.5" y="6" width="27" height="17" fill="#fff"/>
 <g stroke="#333" stroke-width="0.8" stroke-dasharray="3 0.8" fill="none"><path d="M26.5 9 Q30 8 33 9.5 T40 9 T48 10 M27 12.5 Q31 11 35 13 T43 12 T50 13 M26 16 Q30 15 34 16.5 T42 15.5 T49 16.5 M28 19.5 Q32 18.5 36 20 T44 19 T48 20" /></g>
 <rect x="24.5" y="36" width="27" height="17" fill="url(#chk2)"/><circle cx="26.5" cy="42" r="1.6" fill="#f4c030"/><circle cx="49.5" cy="46" r="1.8" fill="#f4c030"/><path d="M25.5 49 H28" stroke="#f4c030" stroke-width="1"/>
 <rect x="24.5" y="66" width="27" height="17" fill="url(#chk2)"/>
 <rect x="24.5" y="96" width="27" height="17" fill="url(#chk2)"/>
 <rect x="24.5" y="126.5" width="27" height="17" fill="url(#chk2)"/>
 <g font-family="Liberation Sans" font-size="9.7" fill="#f0f0f0">
  <text x="63.5" y="17.5">dothitramy2</text><text x="63.5" y="47.5">Lớp3</text><text x="63.5" y="77.5">Lớp2</text><text x="63.5" y="107.5">Lớp2</text>
  <text x="63.5" y="138" font-weight="bold" fill="#fff">Lớp1</text>
 </g>
 <g transform="translate(206,135)"><g fill="#fff"><circle r="4.5"/><path d="M0 -7 L1.3 -4 L-1.3 -4Z M0 7 L1.3 4 L-1.3 4Z M-7 0 L-4 1.3 L-4 -1.3Z M7 0 L4 1.3 L4 -1.3Z M-5 -5 L-2.2 -3.5 L-3.5 -2.2Z M5 5 L2.2 3.5 L3.5 2.2Z M5 -5 L3.5 -2.2 L2.2 -3.5Z M-5 5 L-3.5 2.2 L-2.2 3.5Z"/></g><circle r="1.8" fill="#4a9ad8"/></g>
</svg>
<div class="a" style="left:1008px;top:329px;width:15px;height:180px;background:linear-gradient(90deg,#2c2c2c,#3a3a3a,#2c2c2c)"></div>
<svg class="a" style="left:1008px;top:329px" width="15" height="180"><path d="M7.5 1.5 L11 6 H4Z" fill="#ccc"/><path d="M7.5 178 L11 173.5 H4Z" fill="#ccc"/></svg>
<div class="a" style="left:1009px;top:338px;width:13px;height:140px;background:#6a6a6a;border-radius:4px"></div>
<div class="a" style="left:803px;top:488.5px;font-size:15px;color:rgba(200,200,200,.42);white-space:nowrap;transform-origin:0 0;transform:scaleX(1.0)">Activate Windows</div>
<!-- bottom toolbar -->
<div class="a" style="left:790.5px;top:509px;width:217px;height:21px;background:#242424"></div>
<svg class="a" style="left:790px;top:509px" width="220" height="22">
 <g fill="#474747">
  <rect x="3" y="3" width="17" height="17" rx="2"/><rect x="23" y="3" width="17" height="17" rx="2"/><rect x="43" y="3" width="17" height="17" rx="2"/>
  <rect x="63" y="3" width="22" height="17" rx="2"/><rect x="89" y="3" width="17" height="17" rx="2"/><rect x="114" y="3" width="17" height="17" rx="2"/>
  <rect x="161" y="3" width="17" height="17" rx="2"/>
 </g>
 <rect x="135" y="3" width="17" height="17" rx="2" fill="#222" stroke="#3a3a3a"/>
 <g stroke="#e6e6e6" fill="none" stroke-width="1.2">
  <path d="M7 6 H12 L15 9 V17 H7Z"/><path d="M27 6 H32 L35 9 V17 H27Z"/><path d="M47 6 H52 L55 9 V17 H47Z"/>
  <path d="M67 6 H72 L75 9 V17 H67Z"/><path d="M119 8 H126 V17 H119Z M121 6 H128 V14"/>
  <path d="M165 8 H174 M167 8 V17 H172 V8 M168 6 H171"/>
 </g>
 <g fill="#e6e6e6"><path d="M93 8 H98 L99.5 9.5 H102 V17 H93Z"/><rect x="139" y="12" width="5" height="4"/><rect x="146" y="8" width="4" height="4"/><path d="M79 10 L83 10 L81 12.5Z"/></g>
 <g fill="none" stroke="#e6e6e6" stroke-width="1.3"><path d="M75 14 V19 M72.5 16.5 H77.5"/></g>
</svg>
<div class="a" style="left:803.5px;top:508.5px;font-size:11px;color:rgba(200,200,200,.5);white-space:nowrap;transform-origin:0 0;transform:scaleX(1.03)">Go to Settings to activate Windows.</div>
<!-- STATUS -->
<div class="a" style="left:0;top:532px;width:1024px;height:14px;background:#252525"></div>
<div class="a" style="left:0;top:534.5px;width:1024px;font-size:10px;color:#c8c8c8;white-space:nowrap">
 <span class="a" style="left:4.3px;top:0;transform-origin:0 0;transform:scaleX(.85)">1600 * 1200 pixel</span>
 <span class="a" style="left:76.3px;top:0;transform-origin:0 0;transform:scaleX(.87)">(11.6 * 8.7cm)</span>
 <span class="a" style="left:136.7px;top:0;transform-origin:0 0;transform:scaleX(.9)">350 dpi</span>
 <span class="a" style="left:173px;top:0;transform-origin:0 0;transform:scaleX(.8)">33 %</span>
 <span class="a" style="left:199.5px;top:0;transform-origin:0 0;transform:scaleX(.8)">( 1694, 1353 )</span>
</div>
<div class="a" style="left:0;top:546px;width:1024px;height:4px;background:#303030"></div><div class="a" style="left:184px;top:547px;width:36px;height:3px;background:#555"></div>
</body></html>
